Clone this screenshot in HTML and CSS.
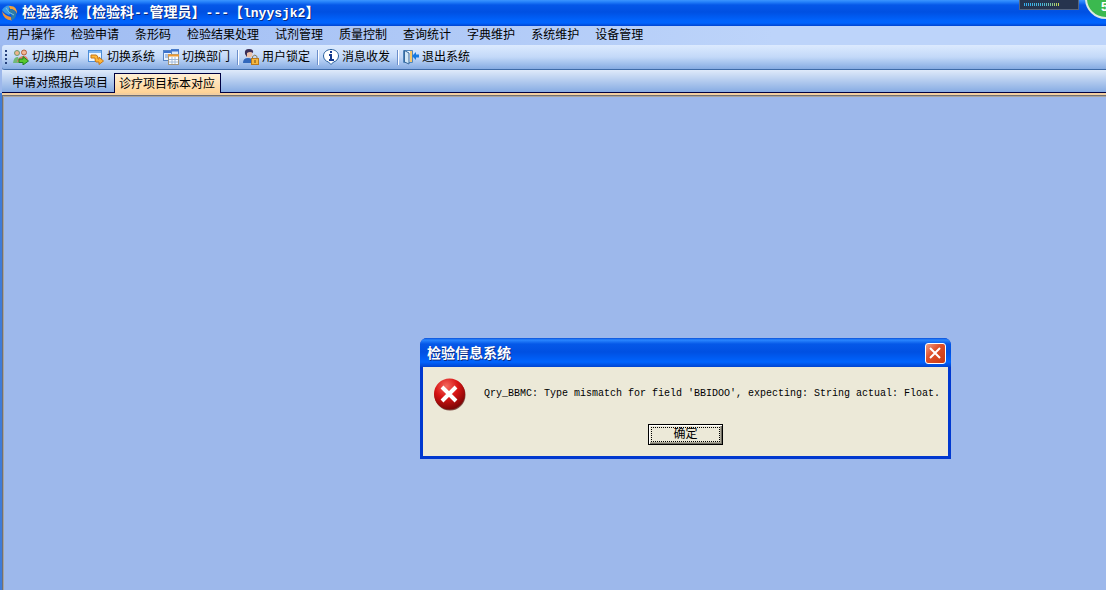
FILE: index.html
```html
<!DOCTYPE html>
<html lang="zh-CN">
<head>
	<meta charset="UTF-8" />
	<meta name="viewport" content="width=device-width, initial-scale=1" />
	<title>检验系统</title>
	<link rel="stylesheet" href="styles.css">
</head>
<body>

<header class="titlebar">
	<svg class="app-icon" width="16" height="16" viewBox="0 0 16 16">
		<path d="M0 5 Q4 -1 9 1 Q5 3 9 8 L7 10 Q2 8 0 5Z" fill="#3b9be8"/>
		<path d="M7 1 Q15 0 15 9 Q13 4 8 4Z" fill="#f0a23a"/>
		<path d="M0 6 Q3 11 9 12 L10 15.5 Q1 15 0 6Z" fill="#ec933a"/>
		<path d="M8 4 Q15 5 14 11 Q12 15 9 15 Q11 9 6 6Z" fill="#2d7ca8"/>
		<path d="M4 3 Q6 8 12 10" stroke="#7cc4e4" stroke-width="1" fill="none"/>
	</svg>
	<h1>检验系统【检验科<span class="latin">--</span>管理员】<span class="latin">---</span>【<span class="latin">lnyysjk2</span>】</h1>
	<div class="meter"><span class="meter-bar"></span></div>
	<div class="ball">5</div>
</header>

<nav class="menu">
	<a href="#">用户操作</a>
	<a href="#">检验申请</a>
	<a href="#">条形码</a>
	<a href="#">检验结果处理</a>
	<a href="#">试剂管理</a>
	<a href="#">质量控制</a>
	<a href="#">查询统计</a>
	<a href="#">字典维护</a>
	<a href="#">系统维护</a>
	<a href="#">设备管理</a>
</nav>

<div class="toolbar">
	<span class="grip"></span>
	<button type="button">
		<svg width="16" height="16" viewBox="0 0 16 16">
			<circle cx="4" cy="4" r="2.5" fill="#f0b48c" stroke="#6c9a70"/>
			<circle cx="11" cy="3.5" r="2.5" fill="#f3b796" stroke="#b4603e"/>
			<path d="M0 14 Q1 7 5 8 L8 14Z" fill="#70b978"/>
			<path d="M4 13 Q6 6 11 7 Q15 7 15 12Z" fill="#e3846d"/>
			<path d="M6 10 H10 V7.5 L15.5 12 L10 16 V13.5 H6Z" fill="#58c82c" stroke="#218322"/>
		</svg>
		<span>切换用户</span>
	</button>
	<button type="button">
		<svg width="16" height="16" viewBox="0 0 16 16">
			<rect x="0.5" y="1.5" width="13" height="11" fill="#eef6ff" stroke="#4c8ed8"/>
			<path d="M1 3H13" stroke="#83b6ef" stroke-width="2"/>
			<path d="M3 6 H8 Q10 6 10 10 H11 V8 L15.5 12 L11 15.5 V13 H8 Q7 13 7 9 H3Z" fill="#ffb638" stroke="#c77716"/>
		</svg>
		<span>切换系统</span>
	</button>
	<button type="button">
		<svg width="16" height="16" viewBox="0 0 16 16">
			<rect x="0.5" y="1.5" width="8" height="10" fill="#eaf3ff" stroke="#5483c5"/>
			<path d="M1 3H8" stroke="#3c72cf" stroke-width="2"/>
			<rect x="8.5" y="0.5" width="7" height="5" fill="#dbe9fb" stroke="#5483c5"/>
			<path d="M8 1.5H16" stroke="#3c72cf" stroke-width="2"/>
			<path d="M2 6H5M2 8H5" stroke="#6c91c8"/>
			<rect x="5.5" y="5.5" width="10" height="10" fill="#fff" stroke="#a4957a"/>
			<path d="M5 6.5H16" stroke="#ee9c35" stroke-width="2"/>
			<path d="M6 10.5H15M6 13H15M9 8V15M12 8V15" stroke="#9eb9da"/>
		</svg>
		<span>切换部门</span>
	</button>
	<span class="sep"></span>
	<button type="button">
		<svg width="16" height="16" viewBox="0 0 16 16">
			<path d="M0 14 Q0 9 5 9 Q10 9 10 14Z" fill="#3268bc"/>
			<circle cx="6" cy="5" r="3.5" fill="#edc2aa"/>
			<path d="M2 5 Q1 0 6 0 Q11 0 10 4 Q7 2 4 4 V8Z" fill="#3a2e57"/>
			<path d="M9.5 9 V7.5 Q12 4.5 14 7.5 V9" fill="none" stroke="#8c7951"/>
			<rect x="8.5" y="9.5" width="7" height="6" fill="#f6b83f" stroke="#b9791d"/>
			<path d="M12 11V14" stroke="#704914"/>
		</svg>
		<span>用户锁定</span>
	</button>
	<span class="sep"></span>
	<button type="button">
		<svg width="16" height="16" viewBox="0 0 16 16">
			<path d="M8 0.5 C12 0.5 15.5 3 15.5 7 C15.5 10 13 12.5 10.5 13 L8 15.5 L5.5 13 C3 12.5 0.5 10 0.5 7 C0.5 3 4 0.5 8 0.5Z" fill="#fff" stroke="#285f9c"/>
			<path d="M7 3H9M6 6H8V10M6 11H11" stroke="#12388d" stroke-width="2" fill="none"/>
		</svg>
		<span>消息收发</span>
	</button>
	<span class="sep"></span>
	<button type="button">
		<svg width="16" height="16" viewBox="0 0 16 16">
			<path d="M0.5 1.5H9.5V13.5H0.5Z" fill="#eaf5ff" stroke="#4f86bc"/>
			<path d="M1.5 1.5L6 4V15L1.5 13Z" fill="#d3e8f7" stroke="#37699c"/>
			<path d="M7 2H9V13H7Z" fill="#f5c66c"/>
			<path d="M9 7L13 3V5.5H16V8.5H13V11Z" fill="#1479e0"/>
		</svg>
		<span>退出系统</span>
	</button>
</div>

<div class="tabs">
	<button type="button" class="tab">申请对照报告项目</button>
	<button type="button" class="tab active">诊疗项目标本对应</button>
</div>

<main class="workspace"></main>

<div class="dialog" role="alertdialog" aria-labelledby="dialog-title">
	<div class="dialog-title">
		<h2 id="dialog-title">检验信息系统</h2>
		<button type="button" class="close" aria-label="关闭">
			<svg width="21" height="21" viewBox="0 0 21 21">
				<path d="M5 5L15 15M15 5L5 15" stroke="#fff" stroke-width="2"/>
			</svg>
		</button>
	</div>
	<div class="dialog-body">
		<div class="message">
			<svg width="34" height="34" viewBox="0 0 34 34">
				<defs>
					<radialGradient id="red" cx="0.4" cy="0.25" r="0.75">
						<stop offset="0" stop-color="#f46a60"/>
						<stop offset="0.5" stop-color="#d81414"/>
						<stop offset="1" stop-color="#7c0505"/>
					</radialGradient>
				</defs>
				<circle cx="17" cy="17" r="15.5" fill="#7d4a42"/>
				<circle cx="16.5" cy="16" r="15.5" fill="url(#red)"/>
				<path d="M9 9L23 23M23 9L9 23" stroke="#fff" stroke-width="4"/>
			</svg>
			<p>Qry_BBMC: Type mismatch for field 'BBIDOO', expecting: String actual: Float.</p>
		</div>
		<button type="button" class="ok">确定</button>
	</div>
</div>

</body>
</html>
```
FILE: styles.css
```css
* {
	box-sizing: border-box;
}

body {
	margin: 0;
	min-height: 100vh;
	display: flex;
	flex-direction: column;
	overflow: hidden;
	font-family: "Liberation Mono", "Noto Sans CJK SC", monospace;
	font-size: 12px;
	line-height: 16px;
	color: #000;
	background: #9db8eb;
}

button {
	margin: 0;
	padding: 0;
	border: 0;
	background: none;
	font: inherit;
	color: inherit;
	white-space: nowrap;
}

svg {
	flex: none;
}

.titlebar {
	position: relative;
	display: flex;
	align-items: center;
	gap: 4px;
	height: 26px;
	padding-left: 2px;
	background: linear-gradient(#3c96ff 0, #2480fa 2px, #0558e8 5px, #0050e2 12px, #0062fb 20px, #0064fe 23px, #0044d0 26px);
}

.titlebar h1 {
	margin: 0;
	font-size: 14px;
	line-height: 20px;
	color: #fff;
	text-shadow: 1px 1px #0a2a80;
	white-space: nowrap;
}

.latin {
	font-size: 13px;
}

.meter {
	position: absolute;
	top: 0;
	right: 27px;
	width: 60px;
	height: 10px;
	padding: 3px 4px 2px;
	background: #26344e;
	border: 1px solid #56657e;
	border-top: 0;
}

.meter-bar {
	display: block;
	width: 36px;
	height: 3px;
	background: linear-gradient(90deg, #35aef0, #4fb7d0 60%, #d3dc45);
	-webkit-mask: repeating-linear-gradient(90deg, #000 0 1px, transparent 1px 2px);
}

.ball {
	position: absolute;
	top: -22px;
	right: -20px;
	width: 41px;
	height: 41px;
	padding: 19px 0 0 14px;
	border: 2px solid #dcebe4;
	border-radius: 50%;
	background: #3bb94f;
	color: #fff;
	font: bold 13px/16px "Liberation Sans", sans-serif;
	z-index: 1;
}

.menu {
	display: flex;
	gap: 16px;
	height: 19px;
	padding-left: 7px;
	background: linear-gradient(90deg, #9ebbf2, #bdd4fa 70%);
}

.menu a {
	padding-top: 1px;
	color: #000;
	text-decoration: none;
	line-height: 18px;
	white-space: nowrap;
}

.toolbar {
	display: flex;
	align-items: center;
	height: 25px;
	margin-left: 2px;
	padding-left: 3px;
	border-radius: 3px 0 0 3px;
	background: linear-gradient(#dceafe, #c3d9f8 50%, #86abe2);
	border-bottom: 1px solid #3f6ba8;
}

.toolbar button {
	display: flex;
	align-items: center;
	gap: 3px;
	margin-right: 8px;
}

.toolbar button span {
	padding-top: 2px;
}

.grip {
	width: 2px;
	height: 14px;
	margin-right: 6px;
	background: repeating-linear-gradient(#27417c 0 2px, transparent 2px 4px);
}

.sep {
	width: 2px;
	height: 15px;
	margin: 0 4px 0 -1px;
	background: #6b8fcb;
	border-right: 1px solid #fff;
}

.tabs {
	display: flex;
	align-items: flex-end;
	height: 23px;
	margin-left: 2px;
	background: linear-gradient(#dfeafa, #87ace3);
	border-bottom: 1px solid #000040;
}

.tab {
	height: 19px;
	padding: 3px 6px 0 10px;
	line-height: 16px;
}

.tab.active {
	height: 20px;
	margin-bottom: -1px;
	padding: 3px 5px 0 4px;
	border: 1px solid #000040;
	border-bottom: 0;
	background: linear-gradient(#fff0d6, #ffd294);
}

.workspace {
	flex: 1;
	border-left: 2px solid #3f7cd8;
	background: #9db8eb;
	box-shadow: inset 0 2px #f3cfa0, inset 1px 3px #6f7078, inset 2px 4px #a9a49c;
}

.dialog {
	position: absolute;
	top: 338px;
	left: 420px;
	width: 531px;
	padding: 0 3px 3px;
	border-radius: 7px 7px 0 0;
	background: #0038d0;
}

.dialog-title {
	display: flex;
	align-items: center;
	justify-content: space-between;
	height: 29px;
	margin: 0 -3px;
	padding: 2px 5px 0 7px;
	border-radius: 7px 7px 0 0;
	background: linear-gradient(#0a50d8 0, #2a86ff 2px, #0558e8 6px, #0050e2 14px, #0064fe 24px, #0044d0 29px);
}

.dialog-title h2 {
	margin: 0;
	font-size: 14px;
	line-height: 20px;
	color: #fff;
	text-shadow: 1px 1px #0a2a80;
}

.close {
	width: 21px;
	height: 21px;
	border: 1px solid #fff;
	border-radius: 3px;
	background: linear-gradient(135deg, #f0a088, #e0502b 40%, #c73a12);
}

.close svg {
	display: block;
	margin: -1px;
}

.dialog-body {
	display: flex;
	flex-direction: column;
	align-items: center;
	gap: 12px;
	padding: 11px 10px 11px;
	background: #ece9d8;
}

.message {
	display: flex;
	align-self: stretch;
	gap: 17px;
}

.message p {
	margin: 8px 0 0;
	font-size: 10px;
	line-height: 16px;
	white-space: nowrap;
}

.ok {
	width: 75px;
	height: 21px;
	border: 1px solid #000;
	background: #ece9d8;
	box-shadow: inset 1px 1px #fff, inset -1px -1px #716f64, inset -2px -2px #aca899;
	outline: 1px dotted #000;
	outline-offset: -4px;
	line-height: 18px;
}
```
